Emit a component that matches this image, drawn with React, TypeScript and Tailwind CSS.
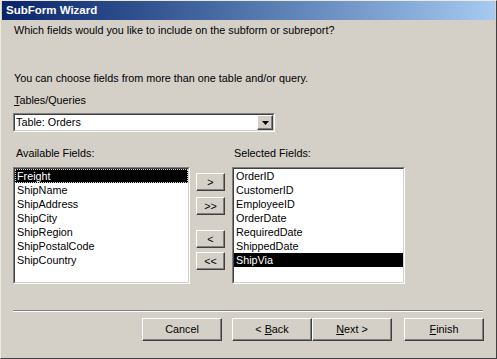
import React from "react";

const font = { fontFamily: '"Liberation Sans", Arial, sans-serif' };

function Btn({ children, className = "" }: { children: React.ReactNode; className?: string }) {
  return (
    <div
      className={
        "flex items-center justify-center border border-t-white border-l-white border-r-[#404040] border-b-[#404040] bg-[#d4d0c8] shadow-[inset_-1px_-1px_0_#808080] text-[10.8px] text-black " +
        className
      }
    >
      {children}
    </div>
  );
}

function Sunken({ children, className = "" }: { children: React.ReactNode; className?: string }) {
  return (
    <div className={"border border-t-[#808080] border-l-[#808080] border-r-white border-b-white " + className}>
      <div className="h-full w-full border border-t-[#404040] border-l-[#404040] border-r-[#d4d0c8] border-b-[#d4d0c8] bg-white">
        {children}
      </div>
    </div>
  );
}

const avail = ["Freight", "ShipName", "ShipAddress", "ShipCity", "ShipRegion", "ShipPostalCode", "ShipCountry"];
const selected = ["OrderID", "CustomerID", "EmployeeID", "OrderDate", "RequiredDate", "ShippedDate", "ShipVia"];

export default function App() {
  return (
    <div style={font} className="w-[497px] h-[359px] overflow-hidden bg-[#d4d0c8] text-black">
      <div className="w-[497px] h-[359px] flex flex-col border border-t-[#ece9e2] border-l-[#ece9e2] border-r-[#404040] border-b-[#404040]">
        <div className="h-[19px] mx-[1px] flex items-center bg-gradient-to-r from-[#0a246a] to-[#a6caf0] pl-[4px]">
          <span className="text-white font-bold text-[11.5px] leading-none">SubForm Wizard</span>
        </div>
        <div className="flex flex-col pl-[12px] text-[10.8px]">
          <div className="mt-[3px] h-[14px] leading-[14px] pl-[1px]">
            Which fields would you like to include on the subform or subreport?
          </div>
          <div className="mt-[34px] h-[14px] leading-[14px] pl-[1px]">
            You can choose fields from more than one table and/or query.
          </div>
          <div className="mt-[8px] h-[14px] leading-[14px] pl-[1px]">
            <span className="underline">T</span>ables/Queries
          </div>
          <Sunken className="mt-[6px] w-[262px] h-[19px]">
            <div className="flex h-full items-center">
              <span className="flex-1 pl-[1px] leading-[15px]">Table: Orders</span>
              <Btn className="w-[16px] h-[15px]">
                <svg width="7" height="4" viewBox="0 0 7 4">
                  <path d="M0 0h7L3.5 4z" fill="#000" />
                </svg>
              </Btn>
            </div>
          </Sunken>
          <div className="flex mt-[14px] h-[14px] leading-[14px]">
            <span className="w-[218px] pl-[3px]">Available Fields:</span>
            <span className="pl-[3px]">Selected Fields:</span>
          </div>
          <div className="flex mt-[7px]">
            <Sunken className="w-[177px] h-[117px]">
              <div className="flex flex-col">
                {avail.map((f, i) =>
                  i === 0 ? (
                    <div
                      key={f}
                      className="h-[14px] leading-[14px] bg-black text-white pl-[2px] outline-1 outline-dotted outline-[#d4d0c8] -outline-offset-1"
                    >
                      {f}
                    </div>
                  ) : (
                    <div key={f} className="h-[14px] leading-[14px] pl-[2px]">
                      {f}
                    </div>
                  )
                )}
              </div>
            </Sunken>
            <div className="flex flex-col ml-[6px] w-[30px] pt-[6px]">
              <Btn className="h-[18px] w-[29px]">&gt;</Btn>
              <Btn className="h-[18px] w-[29px] mt-[6px]">&gt;&gt;</Btn>
              <Btn className="h-[18px] w-[29px] mt-[15px]">&lt;</Btn>
              <Btn className="h-[18px] w-[29px] mt-[4px]">&lt;&lt;</Btn>
            </div>
            <Sunken className="ml-[6px] w-[173px] h-[117px]">
              <div className="flex flex-col">
                {selected.map((f, i) => (
                  <div
                    key={f}
                    className={
                      "h-[14px] leading-[14px] pl-[2px] " + (i === selected.length - 1 ? "bg-black text-white" : "")
                    }
                  >
                    {f}
                  </div>
                ))}
              </div>
            </Sunken>
          </div>
          <div className="mt-[26px] w-[470px] h-[2px] border-t border-t-[#808080] border-b border-b-white" />
          <div className="flex mt-[6px] w-[471px] justify-end">
            <Btn className="w-[80px] h-[23px]">Cancel</Btn>
            <Btn className="w-[80px] h-[23px] ml-[10px]">
              &lt;&nbsp;<span className="underline">B</span>ack
            </Btn>
            <Btn className="w-[80px] h-[23px]">
              <span className="underline">N</span>ext&nbsp;&gt;
            </Btn>
            <Btn className="w-[80px] h-[23px] ml-[12px]">
              <span className="underline">F</span>inish
            </Btn>
          </div>
        </div>
      </div>
    </div>
  );
}
